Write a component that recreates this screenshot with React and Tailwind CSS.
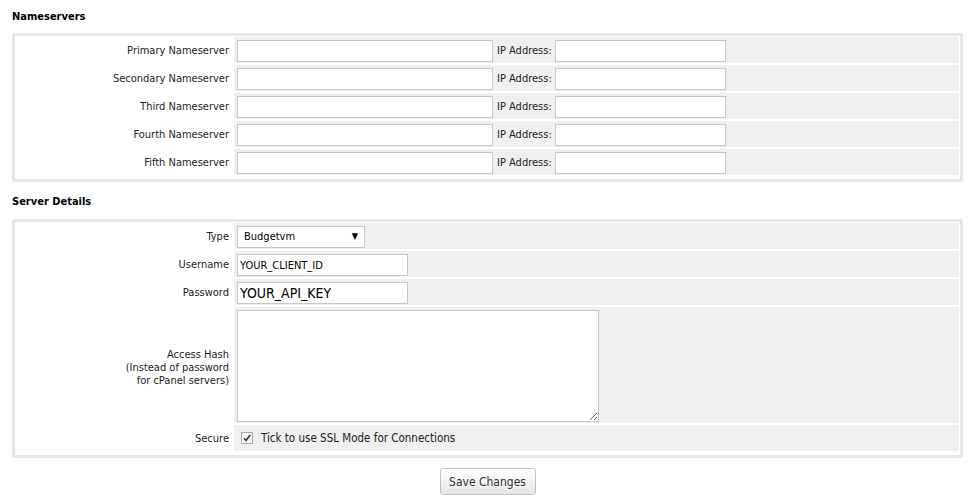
import React from 'react';

const font = { fontFamily: '"DejaVu Sans Condensed", "DejaVu Sans", Verdana, sans-serif', fontStretch: 'condensed' };
const inputFont = { fontFamily: '"DejaVu Sans", Verdana, sans-serif' };

const Row = ({ label, children }) => (
  <div className="flex gap-[2px]">
    <div className="w-[216px] shrink-0 flex items-center justify-end pr-[3px] text-right leading-[13px]">
      {label}
    </div>
    <div className="flex-1 bg-[#efefef] flex items-center px-[3px] pt-[3px] pb-[1px] min-h-[26px]">{children}</div>
  </div>
);

const Input = ({ w, value, big }) => (
  <input
    readOnly
    value={value || ''}
    className={`h-[22px] border border-[#c6c6c6] bg-white px-[2px] outline-none text-black leading-[20px] ${big ? 'text-[14px]' : 'text-[11px]'}`}
    style={{ width: w, ...inputFont }}
  />
);

const Panel = ({ children }) => (
  <div className="mx-[12px] border-[3px] border-[#e3e7ea] rounded-[3px] pt-[1px] px-[1px] pb-[4px] flex flex-col gap-[2px]">{children}</div>
);

export default function App() {
  const ns = ['Primary', 'Secondary', 'Third', 'Fourth', 'Fifth'];
  return (
    <div className="bg-white w-[975px] h-[501px] text-[11px] text-[#222]" style={font}>
      <div className="px-[12px] pt-[9px] h-[33px] font-bold text-[11px] text-black">Nameservers</div>
      <Panel>
        {ns.map((n) => (
          <Row key={n} label={`${n} Nameserver`}>
            <Input w="256px" />
            <span className="ml-[4px] mr-[3px]">IP Address:</span>
            <Input w="171px" />
          </Row>
        ))}
      </Panel>
      <div className="px-[12px] pt-[12px] h-[37px] font-bold text-[11px] text-black">Server Details</div>
      <Panel>
        <Row label="Type">
          <div className="h-[22px] w-[128px] border border-[#c6c6c6] bg-white flex items-center justify-between pl-[6px] pr-[6px] text-black">
            <span>Budgetvm</span>
            <span className="text-[9px]">▼</span>
          </div>
        </Row>
        <Row label="Username">
          <Input w="171px" value="YOUR_CLIENT_ID" />
        </Row>
        <Row label="Password">
          <Input w="171px" value="YOUR_API_KEY" big />
        </Row>
        <Row label={<span className="pt-[4px]">Access Hash<br />(Instead of password<br />for cPanel servers)</span>}>
          <textarea
            readOnly
            className="w-[362px] h-[112px] border border-[#c6c6c6] bg-white outline-none"
            style={inputFont}
          />
        </Row>
        <Row label="Secure">
          <svg width="12" height="12" viewBox="0 0 12 12" className="ml-[4px] mr-[8px] mb-[3px]">
            <rect x="0.5" y="0.5" width="11" height="11" fill="#f4f4f4" stroke="#a9a9a9" />
            <path d="M3 6.2 L5 8.5 L9.2 3" fill="none" stroke="#333" strokeWidth="1.6" />
          </svg>
          <span className="text-[11.5px] text-[#222]">Tick to use SSL Mode for Connections</span>
        </Row>
      </Panel>
      <div className="flex justify-center pt-[10px]">
        <button
          className="h-[27px] w-[96px] border border-[#c4c4c4] rounded-[3px] bg-gradient-to-b from-white to-[#e6e6e6] text-[12px] text-[#333]"
          style={font}
        >
          Save Changes
        </button>
      </div>
    </div>
  );
}
